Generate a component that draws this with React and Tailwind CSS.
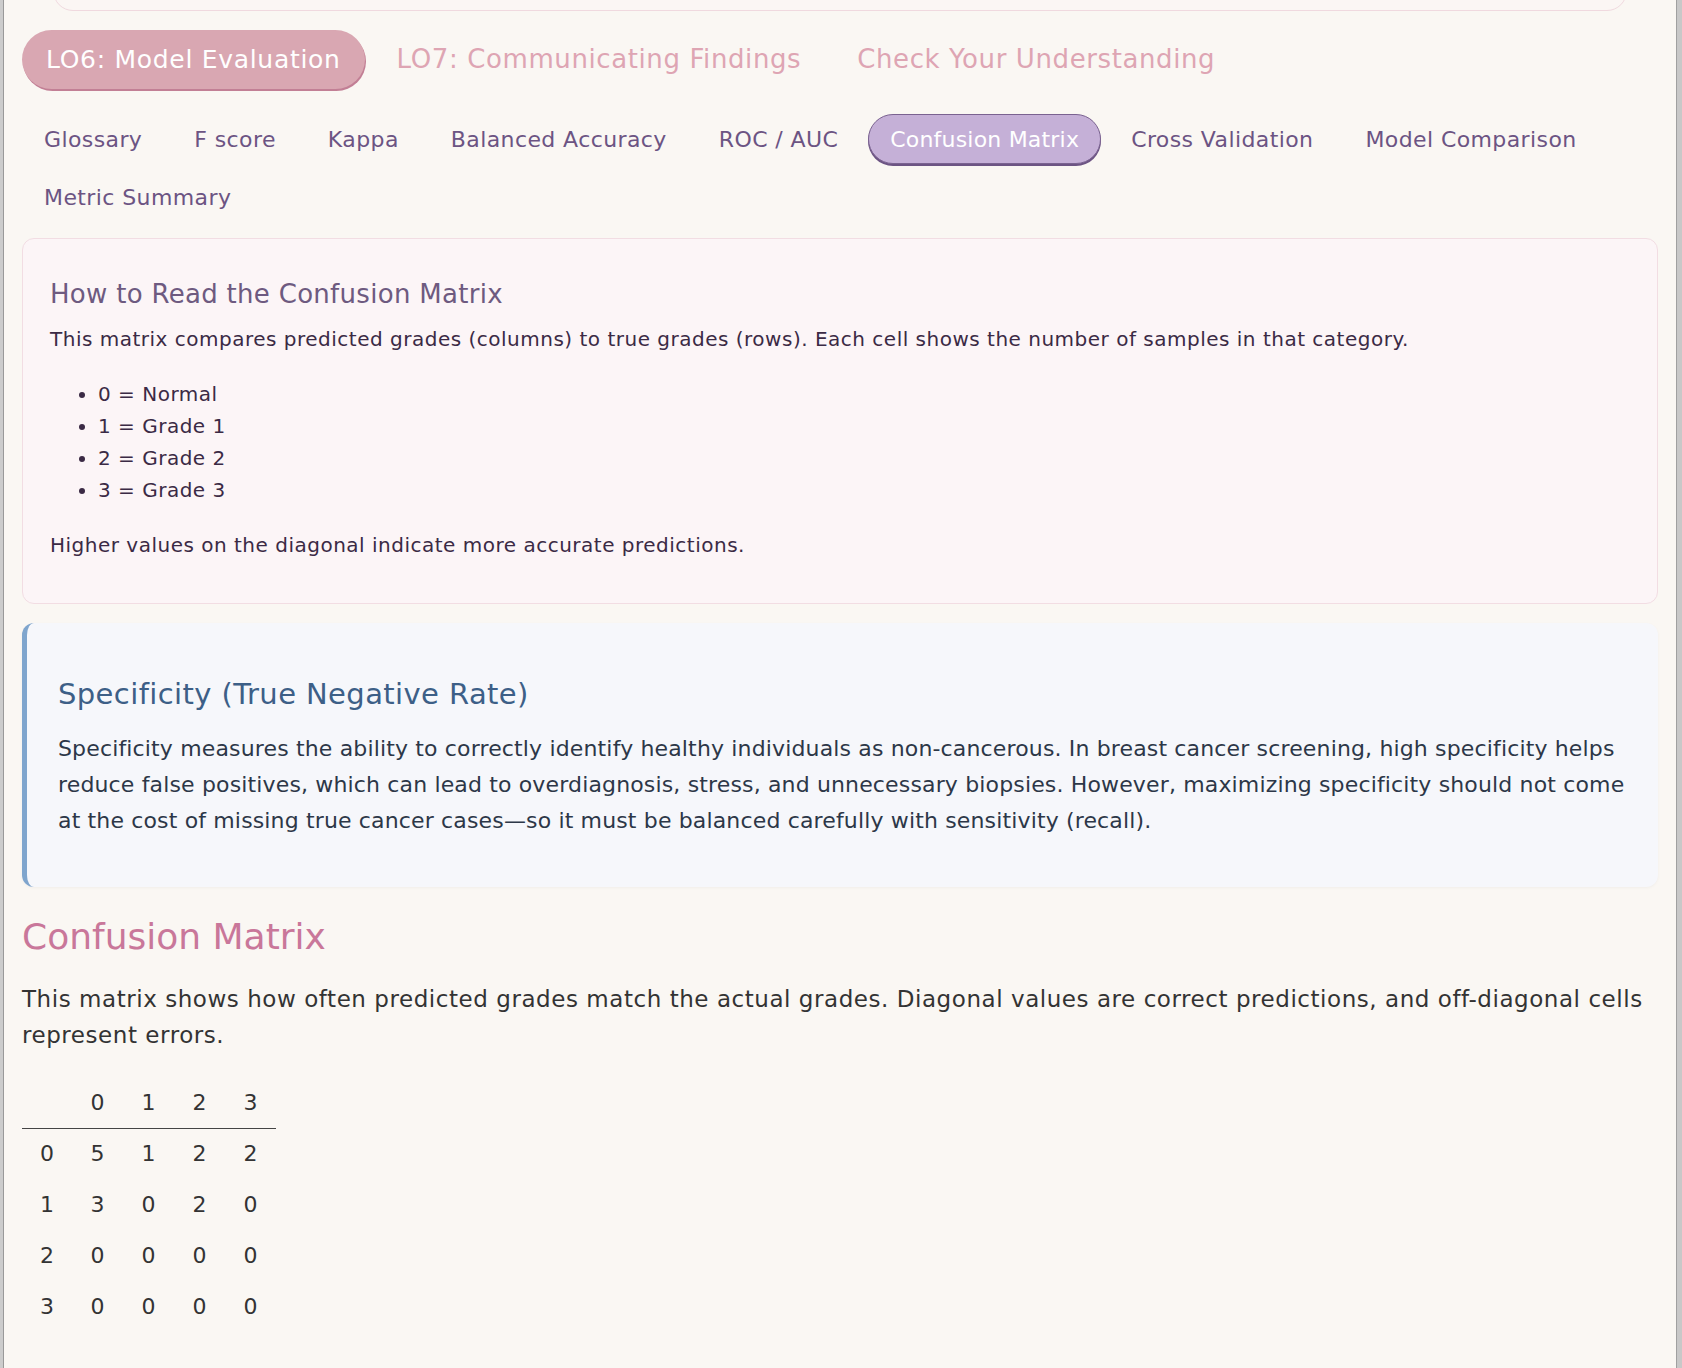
import React from 'react';

const mainTabs = ['LO6: Model Evaluation', 'LO7: Communicating Findings', 'Check Your Understanding'];
const subTabs = [
  'Glossary',
  'F score',
  'Kappa',
  'Balanced Accuracy',
  'ROC / AUC',
  'Confusion Matrix',
  'Cross Validation',
  'Model Comparison',
  'Metric Summary',
];
const matrix = [
  [0, 5, 1, 2, 2],
  [1, 3, 0, 2, 0],
  [2, 0, 0, 0, 0],
  [3, 0, 0, 0, 0],
];

export default function App() {
  const activeMain = mainTabs[0];
  const activeSub = 'Confusion Matrix';

  return (
    <div className="flex min-h-screen w-full bg-[#faf7f3] font-['DejaVu_Sans',sans-serif]">
      <div className="w-[4px] shrink-0 bg-[#cccccc] border-r border-[#999999]" />

      <main className="flex-1 min-w-0 px-[18px] pb-10">
        {/* header card, mostly scrolled off */}
        <div className="mx-[31px] -mt-[30px] h-[41px] rounded-[20px] border border-[#f0d9df] bg-[#fbf6f4]" />

        <div className="mt-[19px] flex flex-wrap gap-2">
          {mainTabs.map(tab => (
            <button
              key={tab}
              className={
                tab === activeMain
                  ? 'h-[59px] px-6 rounded-full bg-[#d9a7b2] text-white text-[25px] tracking-[0.7px] shadow-[1px_2px_0_#c27f95]'
                  : 'h-[59px] px-6 rounded-full text-[#dea5b3] text-[26px] tracking-[0.6px]'
              }
            >
              {tab}
            </button>
          ))}
        </div>

        <div className="mt-[25px] flex flex-wrap gap-x-2 gap-y-[8px]">
          {subTabs.map(tab => (
            <button
              key={tab}
              className={
                tab === activeSub
                  ? 'h-[50px] px-[21px] rounded-full bg-[#c5b0d7] text-white text-[22px] tracking-[0.2px] border border-[#7a6290] shadow-[0_2px_0_#6c5483]'
                  : 'h-[50px] px-[22px] rounded-full text-[#6c5483] text-[22px] tracking-[0.4px]'
              }
            >
              {tab}
            </button>
          ))}
        </div>

        <section className="mt-[16px] rounded-[12px] border border-[#f2dde3] bg-[#fcf5f7] px-[27px] pt-[38px] pb-[42px] text-[#3b2a45] text-[20px] tracking-[0.5px] leading-[32px]">
          <h3 className="text-[26px] leading-[34px] tracking-[0.3px] text-[#6e5a80]">How to Read the Confusion Matrix</h3>
          <p className="mt-[12px]">
            This matrix compares predicted grades (columns) to true grades (rows). Each cell shows the number of samples in that category.
          </p>
          <ul className="mt-[23px] list-disc pl-[48px]">
            <li>0 = Normal</li>
            <li>1 = Grade 1</li>
            <li>2 = Grade 2</li>
            <li>3 = Grade 3</li>
          </ul>
          <p className="mt-[23px]">Higher values on the diagonal indicate more accurate predictions.</p>
        </section>

        <section className="mt-[19px] rounded-[12px] border-l-[5px] border-[#7fa5cd] bg-[#f6f7fb] pl-[31px] pr-[32px] pt-[52px] pb-[48px] shadow-[0_1px_3px_rgba(0,0,0,0.04)]">
          <h3 className="text-[29px] leading-[38px] tracking-[0.4px] text-[#3d5f87]">Specificity (True Negative Rate)</h3>
          <p className="mt-[18px] text-[22px] leading-[36px] tracking-[0.15px] text-[#2d3748]">
            Specificity measures the ability to correctly identify healthy individuals as non-cancerous. In breast cancer screening, high specificity helps reduce false positives, which can lead to overdiagnosis, stress, and unnecessary biopsies. However, maximizing specificity should not come at the cost of missing true cancer cases—so it must be balanced carefully with sensitivity (recall).
          </p>
        </section>

        <h2 className="mt-[28px] text-[36px] leading-[44px] text-[#c9779a]">Confusion Matrix</h2>
        <p className="mt-[22px] text-[23px] leading-[36px] tracking-[0.55px] text-[#333333]">
          This matrix shows how often predicted grades match the actual grades. Diagonal values are correct predictions, and off-diagonal cells represent errors.
        </p>

        <table className="mt-[24px] text-[22px] text-[#333333] border-collapse">
          <thead>
            <tr className="h-[51px] border-b border-[#444444]">
              <th className="w-[50px]" />
              {[0, 1, 2, 3].map(c => (
                <th key={c} className="w-[51px] font-normal text-center">{c}</th>
              ))}
            </tr>
          </thead>
          <tbody>
            {matrix.map(row => (
              <tr key={row[0]} className="h-[51px]">
                {row.map((v, i) => (
                  <td key={i} className="text-center">{v}</td>
                ))}
              </tr>
            ))}
          </tbody>
        </table>
      </main>

      <div className="w-[6px] shrink-0 bg-[#c8c8c8] border-l border-[#a0a0a0]" />
    </div>
  );
}
